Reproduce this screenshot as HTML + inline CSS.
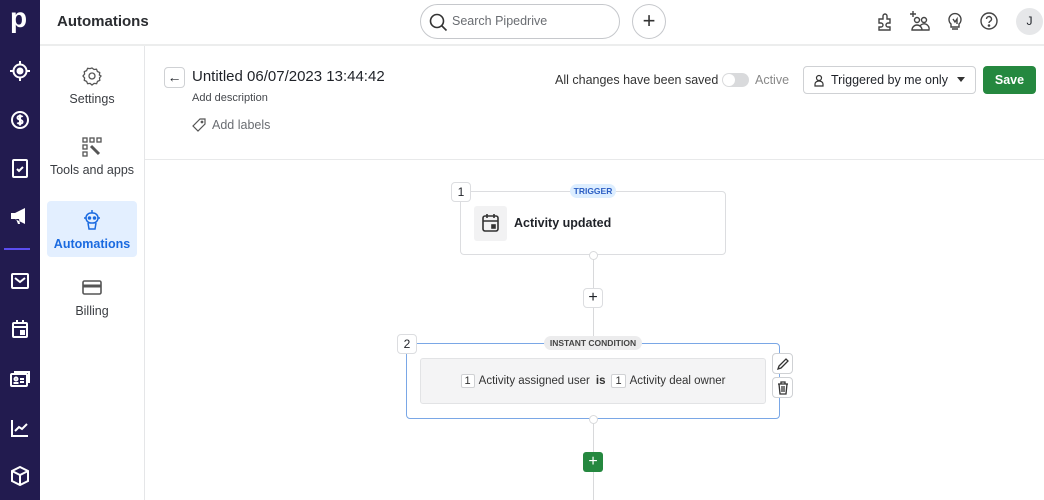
<!DOCTYPE html>
<html><head><meta charset="utf-8"><style>
*{box-sizing:border-box;margin:0;padding:0}
body{width:1044px;height:500px;overflow:hidden;background:#fff;font-family:"Liberation Sans",sans-serif;color:#1f2228;position:relative}
.a{position:absolute}
.side{left:0;top:0;width:40px;height:500px;background:#221b4f}
.side svg{position:absolute;left:8px}
.top{left:40px;top:0;width:1004px;height:46px;border-bottom:2px solid #eceded;background:#fff}
.nav{left:40px;top:46px;width:105px;height:454px;border-right:1px solid #e5e6e8}
.ni{position:absolute;left:7px;width:90px;height:56px;text-align:center;font-size:12.5px;color:#3a3d42;border-radius:4px}
.ni svg{display:block;margin:0 auto 6px}
.btn{border:1px solid #cfd1d4;border-radius:4px;background:#fff}
.tag{border:1px solid #d0d1d4;border-radius:2px;padding:0 3px;background:#fff;font-size:11px;margin-right:4px}
</style></head><body>
<div class="a side">
<div class="a" style="left:10px;top:2px;color:#fff;font-size:28px;font-weight:bold;line-height:32px">p</div>
<svg style="top:59px" width="24" height="24" viewBox="0 0 24 24" fill="none" stroke="#fff" stroke-width="2"><circle cx="12" cy="12" r="6.5"/><circle cx="12" cy="12" r="2.5" fill="#fff"/><path d="M12 2v3M12 19v3M2 12h3M19 12h3"/></svg>
<svg style="top:108px" width="24" height="24" viewBox="0 0 24 24" fill="none" stroke="#fff" stroke-width="2"><circle cx="12" cy="12" r="8"/><path d="M14.5 9c-1-1.5-5-1.5-5 .8 0 2.5 5 1.5 5 4 0 2.3-4 2.3-5 .7M12 6.5v11"/></svg>
<svg style="top:156px" width="24" height="24" viewBox="0 0 24 24" fill="none" stroke="#fff" stroke-width="2"><rect x="5" y="4" width="14" height="17" rx="1"/><path d="M9 13l2 2 4-4"/></svg>
<svg style="top:204px" width="24" height="24" viewBox="0 0 24 24" fill="#fff"><path d="M3 9h4l10-5v16L7 15H3zM8 15l2 5h2l-1-5z"/></svg>
<div class="a" style="left:4px;top:248px;width:26px;height:2px;background:#5b4df0"></div>
<svg style="top:269px" width="24" height="24" viewBox="0 0 24 24" fill="none" stroke="#fff" stroke-width="2"><rect x="4" y="5" width="16" height="14" rx="1"/><path d="M7 9l5 4 5-4"/></svg>
<svg style="top:317px" width="24" height="24" viewBox="0 0 24 24" fill="none" stroke="#fff" stroke-width="2"><rect x="5" y="6" width="14" height="14" rx="1"/><path d="M9 3v4M15 3v4M5 10h14"/><rect x="13" y="14" width="3" height="3" fill="#fff"/></svg>
<svg style="top:367px" width="24" height="24" viewBox="0 0 24 24" fill="none" stroke="#fff" stroke-width="2"><rect x="3" y="7" width="16" height="12" rx="1"/><path d="M6 5h15v11"/><circle cx="8" cy="12" r="1.5"/><path d="M5.5 16h5M12 12h4M12 15h4"/></svg>
<svg style="top:416px" width="24" height="24" viewBox="0 0 24 24" fill="none" stroke="#fff" stroke-width="2"><path d="M4 4v16h16M7 15l4-4 3 2 5-5"/></svg>
<svg style="top:464px" width="24" height="24" viewBox="0 0 24 24" fill="none" stroke="#fff" stroke-width="2"><path d="M12 3l8 4v10l-8 4-8-4V7zM4 7l8 4 8-4M12 11v10"/></svg>
</div>
<div class="a top">
<div class="a" style="left:17px;top:13px;font-size:15px;font-weight:bold;color:#2a2c30">Automations</div>
<div class="a" style="left:380px;top:4px;width:200px;height:35px;border:1px solid #c6c8cc;border-radius:18px">
<svg class="a" style="left:7px;top:7px" width="20" height="20" viewBox="0 0 20 20" fill="none" stroke="#333" stroke-width="1.6"><circle cx="9" cy="9" r="6.5"/><path d="M13.5 13.5l5 5"/></svg>
<div class="a" style="left:31px;top:9px;font-size:12.5px;color:#6a6d72">Search Pipedrive</div></div>
<div class="a" style="left:592px;top:4px;width:34px;height:35px;border:1px solid #c6c8cc;border-radius:50%;text-align:center;font-size:22px;line-height:32px;color:#333">+</div>
<svg class="a" style="left:834px;top:11px" width="22" height="22" viewBox="0 0 22 22" fill="none" stroke="#444" stroke-width="1.4"><path d="M5 8h4V5a2 2 0 0 1 4 0v3h3v4h-2a2 2 0 0 0 0 4h2v3H5v-3h2a2 2 0 0 0 0-4H5z"/></svg>
<svg class="a" style="left:868px;top:9px" width="24" height="24" viewBox="0 0 24 24" fill="none" stroke="#444" stroke-width="1.4"><path d="M5 2v6M2 5h6"/><circle cx="9" cy="11" r="2.5"/><circle cx="16" cy="11" r="2.5"/><path d="M4 21a5 5 0 0 1 10 0zM12 17a5 5 0 0 1 9 4h-7"/></svg>
<svg class="a" style="left:904px;top:10px" width="22" height="22" viewBox="0 0 22 22" fill="none" stroke="#444" stroke-width="1.4"><path d="M7 14a6 6 0 1 1 8 0v3H7zM8 19h6M9 9l2 3 2-3v5"/></svg>
<svg class="a" style="left:938px;top:10px" width="22" height="22" viewBox="0 0 22 22" fill="none" stroke="#444" stroke-width="1.4"><circle cx="11" cy="11" r="8"/><path d="M8.5 9a2.5 2.5 0 1 1 3.5 2.3c-.7.4-1 .9-1 1.7"/><circle cx="11" cy="15.5" r=".6" fill="#444"/></svg>
<div class="a" style="left:976px;top:8px;width:27px;height:27px;border-radius:50%;background:#e6e7e9;text-align:center;line-height:27px;font-size:12px">J</div>
</div>
<div class="a nav">
<div class="ni" style="top:20px"><svg width="20" height="20" viewBox="0 0 20 20" fill="none" stroke="#555" stroke-width="1.3"><path d="M10 2l2 1.5 2.5-.3.9 2.3 2.3 1-.3 2.5L19 10l-1.5 1.9.3 2.5-2.3 1-.9 2.3-2.5-.3L10 19l-1.9-1.6-2.5.3-1-2.3-2.3-1 .3-2.5L1 10l1.6-1.9-.3-2.5 2.3-1 1-2.3 2.5.3z"/><circle cx="10" cy="10" r="3"/></svg>Settings</div>
<div class="ni" style="top:91px"><svg width="20" height="20" viewBox="0 0 20 20" fill="none" stroke="#555" stroke-width="1.3"><rect x="1" y="1" width="4" height="4"/><rect x="8" y="1" width="4" height="4"/><rect x="15" y="1" width="4" height="4"/><rect x="1" y="8" width="4" height="4"/><rect x="1" y="15" width="4" height="4"/><path d="M9 9l8 8" stroke-width="3"/></svg>Tools and apps</div>
<div class="ni" style="top:155px;height:56px;background:#e3efff;color:#1a6ae0;font-weight:bold;padding-top:8px"><svg width="20" height="22" viewBox="0 0 20 22" fill="none" stroke="#1a6ae0" stroke-width="1.5"><path d="M10 1v3"/><rect x="4" y="4" width="12" height="10" rx="5"/><circle cx="7.5" cy="9" r="1" fill="#1a6ae0"/><circle cx="12.5" cy="9" r="1" fill="#1a6ae0"/><path d="M6 14l1 6h6l1-6M2 9h2M16 9h2"/></svg>Automations</div>
<div class="ni" style="top:232px"><svg width="22" height="20" viewBox="0 0 22 20" fill="none" stroke="#555" stroke-width="1.6"><rect x="2" y="3" width="18" height="13" rx="1.5"/><path d="M2 8h18" stroke-width="3"/></svg>Billing</div>
</div>
<div class="a" style="left:145px;top:159px;width:899px;height:1px;background:#e8e9ea"></div>
<div class="a btn" style="left:164px;top:67px;width:21px;height:21px;text-align:center;font-size:14px;line-height:18px">←</div>
<div class="a" style="left:192px;top:68px;font-size:15px">Untitled 06/07/2023 13:44:42</div>
<div class="a" style="left:192px;top:92px;font-size:11px;color:#45484d">Add description</div>
<svg class="a" style="left:192px;top:118px" width="14" height="14" viewBox="0 0 14 14" fill="none" stroke="#555" stroke-width="1.2"><path d="M8 1h5v5l-7 7-5-5z"/><circle cx="10" cy="4" r=".8"/></svg>
<div class="a" style="left:212px;top:118px;font-size:12.5px;color:#6a6d72">Add labels</div>
<div class="a" style="left:555px;top:73px;font-size:12.5px;color:#333">All changes have been saved</div>
<div class="a" style="left:722px;top:73px;width:27px;height:14px;border-radius:7px;background:#d9dadc"><div class="a" style="left:1px;top:1px;width:12px;height:12px;border-radius:50%;background:#fff"></div></div>
<div class="a" style="left:755px;top:73px;font-size:12.5px;color:#888">Active</div>
<div class="a btn" style="left:803px;top:66px;width:173px;height:28px">
<svg class="a" style="left:9px;top:7px" width="12" height="13" viewBox="0 0 12 13" fill="none" stroke="#333" stroke-width="1.2"><circle cx="6" cy="4" r="2.5"/><path d="M2 12V10a4 3 0 0 1 8 0v2z"/></svg>
<div class="a" style="left:27px;top:6px;font-size:12.5px;font-weight:500">Triggered by me only</div>
<div class="a" style="left:153px;top:10px;border:4px solid transparent;border-top:5px solid #333"></div></div>
<div class="a" style="left:983px;top:66px;width:53px;height:28px;background:#25883f;border-radius:4px;color:#fff;font-size:12.5px;font-weight:bold;text-align:center;line-height:28px">Save</div>
<div class="a" style="left:593px;top:255px;width:1px;height:245px;background:#d8d9db"></div>
<div class="a" style="left:460px;top:191px;width:266px;height:64px;border:1px solid #dcdde0;border-radius:4px;background:#fff"></div>
<div class="a btn" style="left:451px;top:182px;width:20px;height:20px;text-align:center;font-size:12px;line-height:18px;border-color:#dcdde0">1</div>
<div class="a" style="left:570px;top:184px;width:46px;height:14px;border-radius:7px;background:#ddeeff;color:#2d5fc4;font-size:8.5px;font-weight:bold;text-align:center;line-height:14px">TRIGGER</div>
<div class="a" style="left:474px;top:206px;width:33px;height:35px;border-radius:3px;background:#f2f2f3"></div>
<svg class="a" style="left:481px;top:213px" width="19" height="20" viewBox="0 0 19 20" fill="none" stroke="#333" stroke-width="1.6"><rect x="2" y="3" width="15" height="15" rx="2"/><path d="M6 1v4M13 1v4M2 8h15"/><rect x="11" y="12" width="3" height="3" fill="#333"/></svg>
<div class="a" style="left:514px;top:216px;font-size:12.5px;font-weight:bold">Activity updated</div>
<div class="a" style="left:589px;top:251px;width:9px;height:9px;border-radius:50%;background:#fff;border:1px solid #d8d9db"></div>
<div class="a btn" style="left:583px;top:288px;width:20px;height:20px;text-align:center;font-size:16px;line-height:18px;border-color:#dcdde0">+</div>
<div class="a" style="left:406px;top:343px;width:374px;height:76px;border:1px solid #7aa7e6;border-radius:4px;background:#fff"></div>
<div class="a btn" style="left:397px;top:334px;width:20px;height:20px;text-align:center;font-size:12px;line-height:18px;border-color:#dcdde0">2</div>
<div class="a" style="left:544px;top:336px;width:98px;height:14px;border-radius:7px;background:#ececed;color:#444;font-size:8.5px;font-weight:bold;text-align:center;line-height:14px">INSTANT CONDITION</div>
<div class="a" style="left:420px;top:358px;width:346px;height:46px;border:1px solid #e2e3e5;border-radius:3px;background:#f4f4f5;font-size:11.5px;color:#333;display:flex;align-items:center;justify-content:center;white-space:nowrap">
<span class="tag">1</span><span>Activity assigned user</span><b style="margin:0 6px">is</b><span class="tag">1</span><span>Activity deal owner</span></div>
<div class="a btn" style="left:772px;top:353px;width:21px;height:21px"><svg class="a" style="left:3px;top:3px" width="14" height="14" viewBox="0 0 14 14" fill="none" stroke="#333" stroke-width="1.3"><path d="M2 12l1-3 7-7 2 2-7 7z"/></svg></div>
<div class="a btn" style="left:772px;top:377px;width:21px;height:21px"><svg class="a" style="left:3px;top:3px" width="14" height="14" viewBox="0 0 14 14" fill="none" stroke="#333" stroke-width="1.3"><path d="M2 3h10M5 3V1h4v2M3 3l1 10h6l1-10M6 5v6M8 5v6"/></svg></div>
<div class="a" style="left:589px;top:415px;width:9px;height:9px;border-radius:50%;background:#fff;border:1px solid #d8d9db"></div>
<div class="a" style="left:583px;top:452px;width:20px;height:20px;border-radius:3px;background:#25883f;color:#fff;text-align:center;font-size:16px;line-height:19px">+</div>
</body></html>
